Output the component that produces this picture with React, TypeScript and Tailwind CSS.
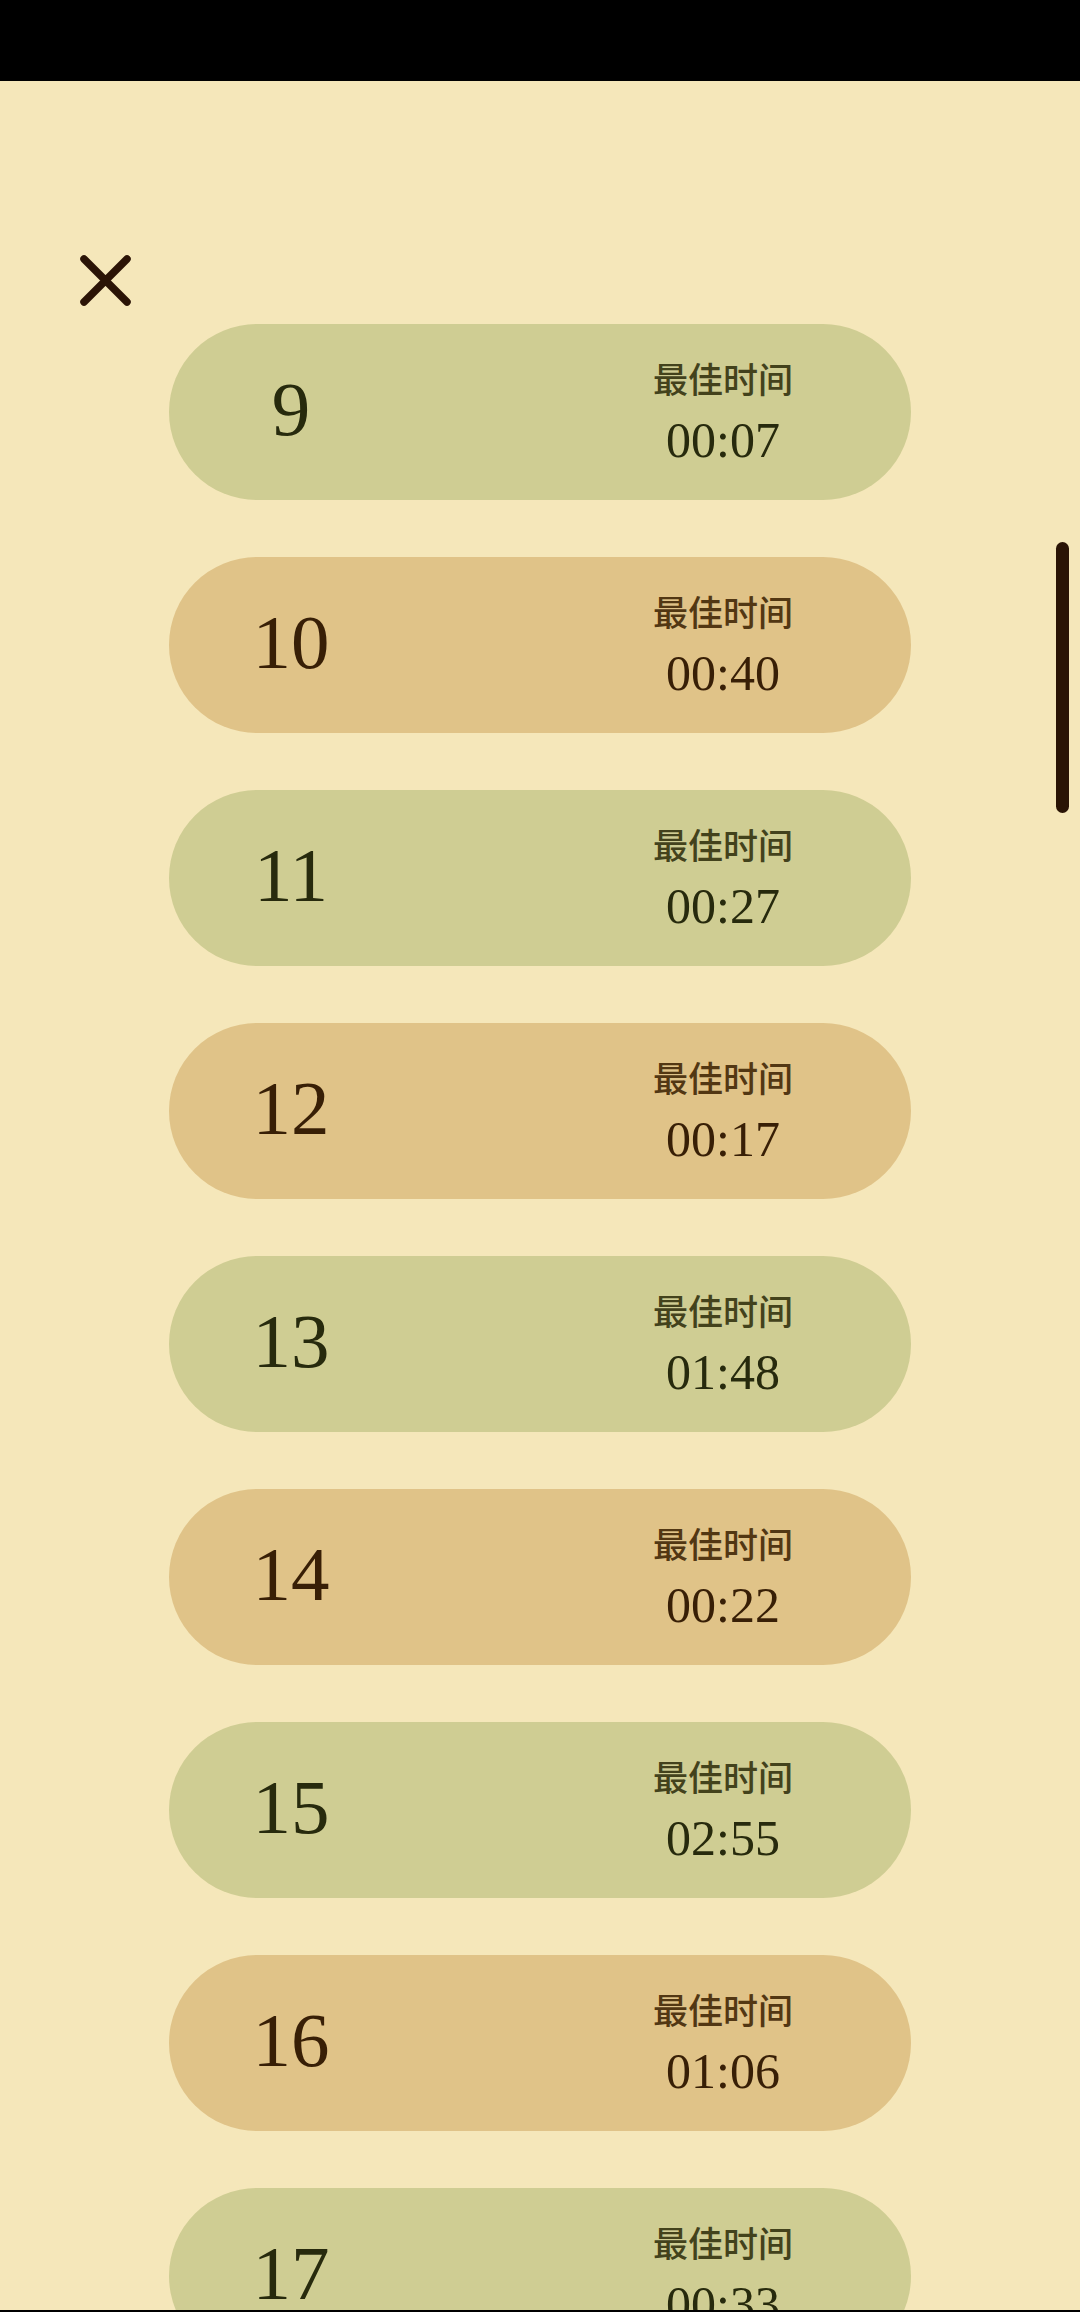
import React from "react";

const items = [
  { n: "9", t: "00:07" },
  { n: "10", t: "00:40" },
  { n: "11", t: "00:27" },
  { n: "12", t: "00:17" },
  { n: "13", t: "01:48" },
  { n: "14", t: "00:22" },
  { n: "15", t: "02:55" },
  { n: "16", t: "01:06" },
  { n: "17", t: "00:33" },
];

function Pill({ n, t, green }: { n: string; t: string; green: boolean }) {
  return (
    <div
      className={
        "flex h-[176px] w-[742px] shrink-0 items-center justify-between rounded-full pl-[62px] pr-[108px] " +
        (green ? "bg-[#cfcd93]" : "bg-[#e0c388]")
      }
    >
      <div
        className={
          "w-[120px] pb-[6px] text-center text-[77px] leading-none " +
          (green ? "text-[#272a0d]" : "text-[#381f06]")
        }
        style={{ fontFamily: '"Liberation Serif", serif' }}
      >
        {n}
      </div>
      <div className="flex w-[160px] flex-col items-center">
        <div
          className={
            "h-[35px] text-[35px] font-medium leading-none " +
            (green ? "text-[#43421c]" : "text-[#523713]")
          }
          style={{ fontFamily: '"Noto Sans CJK SC", sans-serif' }}
        >
          最佳时间
        </div>
        <div
          className={
            "mt-[20px] h-[50px] text-[50px] leading-none " +
            (green ? "text-[#272a0d]" : "text-[#381f06]")
          }
          style={{ fontFamily: '"Liberation Serif", serif' }}
        >
          {t}
        </div>
      </div>
    </div>
  );
}

export default function App() {
  return (
    <div className="relative h-[2312px] w-[1080px] overflow-hidden bg-[#f5e7ba]">
      <div className="h-[81px] w-full bg-black" />
      <div className="flex flex-col">
        <div className="mt-[174px] pl-[80px]">
          <svg width="51" height="51" viewBox="0 0 51 51" fill="none">
            <path
              d="M4 4 L47 47 M47 4 L4 47"
              stroke="#2b1406"
              strokeWidth="7.5"
              strokeLinecap="round"
            />
          </svg>
        </div>
        <div className="mt-[18px] flex flex-col items-center gap-[57px]">
          {items.map((it, i) => (
            <Pill key={it.n} n={it.n} t={it.t} green={i % 2 === 0} />
          ))}
        </div>
      </div>
      <div className="absolute left-[1056px] top-[542px] h-[271px] w-[13px] rounded-full bg-[#2a1405]" />
      <div className="absolute bottom-0 left-0 h-[2px] w-full bg-black" />
    </div>
  );
}
